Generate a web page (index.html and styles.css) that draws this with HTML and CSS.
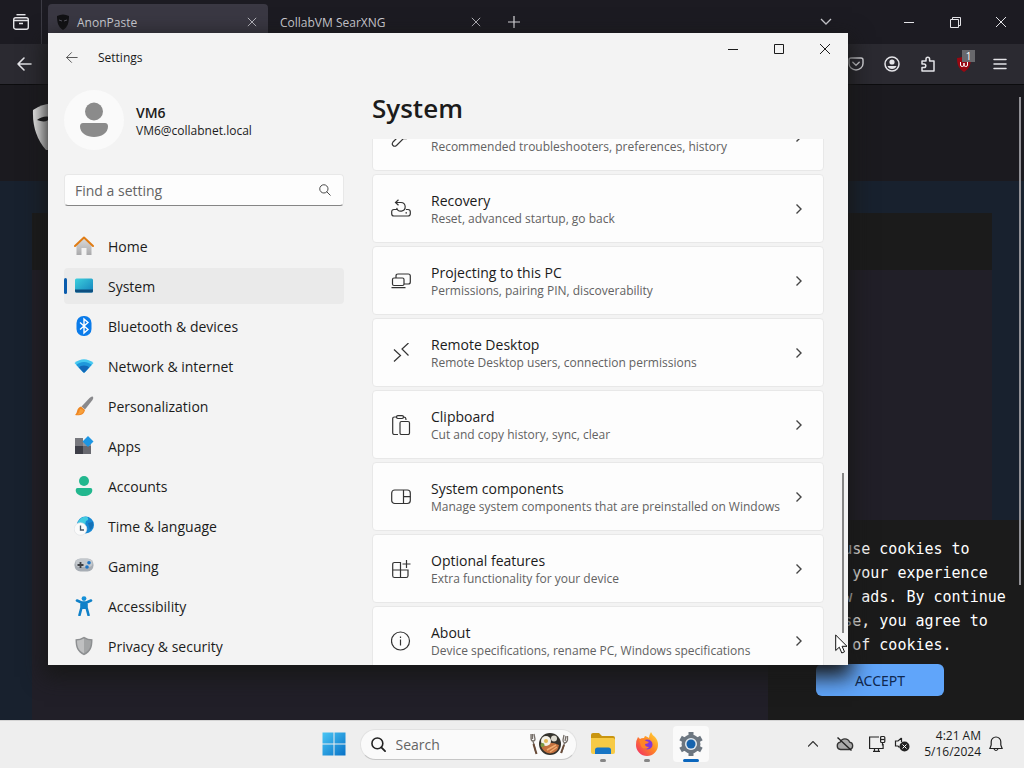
FILE: index.html
```html
<!DOCTYPE html>
<html lang="en">
<head>
  <meta charset="UTF-8" />
  <meta name="viewport" content="width=device-width, initial-scale=1.0"/>
  <title>Settings</title>
  <link rel="stylesheet" href="styles.css">
</head>
<body>
  <!-- Shared icons -->
  <svg class="sprite" aria-hidden="true">
    <symbol id="chevron" viewBox="0 0 16 16"><path d="M5.500 3.500L10 8l-4.500 4.500" fill="none" stroke="#444" stroke-width="1.4"/></symbol>
    <symbol id="close" viewBox="0 0 12 12"><path d="M1 1l10 10M11 1L1 11" fill="none" stroke="currentColor"/></symbol>
    <symbol id="back" viewBox="0 0 16 16"><path d="M15 8H2M8 2L2 8l6 6" fill="none" stroke="currentColor" stroke-width="1.200" stroke-linecap="round" stroke-linejoin="round"/></symbol>
    <symbol id="glass" viewBox="0 0 16 16"><circle cx="6.500" cy="6.500" r="5.500" fill="none" stroke="currentColor" stroke-width="1.300"/><path d="M10.500 10.500L15 15" stroke="currentColor" stroke-width="1.300" stroke-linecap="round"/></symbol>
  </svg>

  <div class="desktop">
    <div class="browser">
      <div class="tab-bar">
        <button class="view-btn" aria-label="Firefox View">
          <svg width="18" height="18" viewBox="0 0 18 18" fill="none" stroke="#e4e4e8" stroke-width="1.4"><path d="M4.500 1.700h9"/><rect x="1.700" y="4.700" width="14.600" height="11.500" rx="2"/><path d="M2 7.500h14M7 10.500h4"/></svg>
        </button>
        <div class="tab active">
          <svg width="14" height="16" viewBox="0 0 14 16"><path d="M1 2q6-3 12 0c0 6-1 11-6 14C2 13 1 8 1 2z" fill="#111114"/><path d="M3 6l3 1M11 6L8 7" stroke="#55545e"/></svg>
          <span>AnonPaste</span>
          <button aria-label="Close tab"><svg width="10" height="10"><use href="#close"/></svg></button>
        </div>
        <div class="tab">
          <span>CollabVM SearXNG</span>
          <button aria-label="Close tab"><svg width="10" height="10"><use href="#close"/></svg></button>
        </div>
        <button class="new-tab" aria-label="New tab">
          <svg width="12" height="12" viewBox="0 0 12 12"><path d="M6 0v12M0 6h12" stroke="#dcdce0" stroke-width="1.2"/></svg>
        </button>
        <button class="all-tabs" aria-label="List all tabs">
          <svg width="12" height="8" viewBox="0 0 12 8"><path d="M1 1l5 5 5-5" fill="none" stroke="#cfcfd4" stroke-width="1.3"/></svg>
        </button>
        <div class="window-controls">
          <button aria-label="Minimize"><svg width="10" height="10"><path d="M0 5.500h10" stroke="currentColor"/></svg></button>
          <button aria-label="Restore"><svg width="11" height="11" fill="none" stroke="currentColor"><path d="M.5 2.500h8v8h-8zM2.500 2.500v-2h8v8h-2"/></svg></button>
          <button aria-label="Close"><svg width="12" height="12"><use href="#close"/></svg></button>
        </div>
      </div>

      <div class="toolbar">
        <button class="go-back" aria-label="Back"><svg width="16" height="16" viewBox="0 0 16 16"><path d="M15 8H2M8 2L2 8l6 6" fill="none" stroke="currentColor" stroke-width="1.600" stroke-linecap="round" stroke-linejoin="round"/></svg></button>
        <button aria-label="Save to Pocket"><svg width="16" height="16" viewBox="0 0 16 16" fill="none" stroke="currentColor" stroke-width="1.4"><path d="M3 2h10a2 2 0 0 1 2 2v3.500a7 6.500 0 0 1-14 0V4a2 2 0 0 1 2-2z"/><path d="M4.800 6.300L8 9.300l3.200-3" stroke-linecap="round"/></svg></button>
        <button aria-label="Account"><svg width="16" height="16" viewBox="0 0 16 16"><circle cx="8" cy="8" r="7" fill="none" stroke="currentColor" stroke-width="1.500"/><circle cx="8" cy="6" r="2.600" fill="currentColor"/><path d="M3.500 10h9c-1 4-8 4-9 0z" fill="currentColor"/></svg></button>
        <button aria-label="Extensions"><svg width="16" height="16" viewBox="0 0 16 16" fill="none" stroke="currentColor" stroke-width="1.500" stroke-linejoin="round"><path d="M2 5h4V3a1.800 1.800 0 0 1 3.600 0v2H14v10H2v-3.500h2a1.800 1.800 0 0 0 0-3.600H2z"/></svg></button>
        <button class="ublock" aria-label="uBlock Origin">
          <svg width="16" height="16" viewBox="0 0 16 16"><path d="M8 0q3 2 7 2c0 7-2 11-7 14C3 13 1 9 1 2q4 0 7-2z" fill="#980812"/><path d="M4.500 6v3q0 1.500 1.700 1.500T8 9V7v2q0 1.500 1.800 1.500T11.500 9V6" fill="none" stroke="#fff"/></svg>
          <span class="count">1</span>
        </button>
        <button aria-label="Menu"><svg width="14" height="12" viewBox="0 0 14 12"><path d="M1 1.500h12M1 6h12M1 10.500h12" stroke="currentColor" stroke-width="1.500" stroke-linecap="round"/></svg></button>
      </div>

      <div class="page">
        <div class="page-header">
          <svg width="40" height="48" viewBox="0 0 40 48"><path d="M1 8Q20-5 39 8c0 20-4 34-19 40h-6Q0 32 1 8z" fill="#f4f4f4"/><path d="M5 18q6-5 14-3-4 7-14 3zM24 17q7-5 12 0-6 6-12 0z" fill="#18181b"/></svg>
        </div>
        <div class="paste">
          <div class="paste-head"></div>
          <div class="paste-body"></div>
        </div>
        <div class="cookies">
          <p>We may use cookies to improve your experience and show ads. By continue to browse, you agree to the use of cookies.</p>
          <button>ACCEPT</button>
        </div>
        <div class="page-scroll"></div>
      </div>

      <div class="settings">
        <div class="titlebar">
          <button class="settings-back" aria-label="Back"><svg width="13" height="13"><use href="#back"/></svg></button>
          <span>Settings</span>
          <div class="window-controls">
            <button aria-label="Minimize"><svg width="10" height="10"><path d="M0 5.500h10" stroke="currentColor"/></svg></button>
            <button aria-label="Maximize"><svg width="10" height="10"><path d="M.5.500h9v9h-9z" fill="none" stroke="currentColor"/></svg></button>
            <button aria-label="Close"><svg width="12" height="12"><use href="#close"/></svg></button>
          </div>
        </div>

        <div class="settings-body">
          <div class="sidebar">
            <div class="profile">
              <div class="avatar"><svg width="30" height="36" viewBox="0 0 30 36" fill="#8b8b8b"><circle cx="15" cy="9.500" r="9"/><path d="M4 21h22q3 0 3 3.500C29 31 22 35 15 35S1 31 1 24.500Q1 21 4 21z"/></svg></div>
              <div>
                <div class="name">VM6</div>
                <div class="email">VM6@collabnet.local</div>
              </div>
            </div>

            <div class="find">
              <input type="text" placeholder="Find a setting" aria-label="Find a setting">
              <svg width="12" height="12"><use href="#glass"/></svg>
            </div>

            <nav>
              <a href="#">
                <svg width="20" height="20" viewBox="0 0 20 20"><defs><linearGradient id="wall" x2="0" y2="1"><stop stop-color="#dcdcdc"/><stop offset="1" stop-color="#a9a9ab"/></linearGradient></defs><path d="M2.500 9L10 2l7.500 7v10h-5v-7h-5v7h-5z" fill="url(#wall)"/><path d="M1 10l9-8.500L19 10" fill="none" stroke="#e07c14" stroke-width="2" stroke-linecap="round" stroke-linejoin="round"/></svg>
                Home
              </a>
              <a href="#" class="selected">
                <svg width="20" height="20" viewBox="0 0 20 20"><defs><linearGradient id="scr" x2="1" y2="1"><stop stop-color="#3dd0dd"/><stop offset="1" stop-color="#1482bd"/></linearGradient></defs><rect x="1" y="2.500" width="18" height="14" rx="1.500" fill="url(#scr)"/><path d="M1 13.500h18v1.500q0 1.500-1.500 1.500h-15Q1 16.500 1 15z" fill="#0d4f80"/></svg>
                System
              </a>
              <a href="#">
                <svg width="20" height="20" viewBox="0 0 20 20"><rect x="2.500" y="0" width="15" height="20" rx="7" fill="#0a7bea"/><path d="M6 6.500l8 7-4 3.500V3l4 3.500-8 7" fill="none" stroke="#fff" stroke-width="1.400"/></svg>
                Bluetooth &amp; devices
              </a>
              <a href="#">
                <svg width="20" height="20" viewBox="0 0 20 20"><defs><clipPath id="fan"><path d="M.5 7Q10-.5 19.500 7L11 16q-1 1-2 0z"/></clipPath></defs><g clip-path="url(#fan)"><rect width="20" height="20" fill="#45c8f0"/><circle cx="10" cy="18" r="12" fill="#1f98db"/><circle cx="10" cy="18" r="8.500" fill="#1268b8"/></g></svg>
                Network &amp; internet
              </a>
              <a href="#">
                <svg width="20" height="20" viewBox="0 0 20 20"><path d="M18.500.5q1.500 1 0 3.500L11 13.500 7.500 10.500 15.500 2q2-2 3-1.500z" fill="#89898c"/><path d="M7 10.500l4 3.500c-1 5-6 6-10 5 3-2 1-7 6-8.500z" fill="#ee8622"/><path d="M6 13q3 0 4 2-3 4-7 3.500 2-1 3-5.500z" fill="#f8a03b"/></svg>
                Personalization
              </a>
              <a href="#">
                <svg width="20" height="20" viewBox="0 0 20 20"><path d="M1 2h8v8H1z" fill="#77787e"/><path d="M1 10h8v8H1z" fill="#3d3e47"/><path d="M9 10h8v8H9z" fill="#686970"/><path d="M9 5h8v5H9z" fill="#929399"/><path d="M14 0l5.500 5.500L14 11 8.500 5.500z" fill="#1c96e4"/></svg>
                Apps
              </a>
              <a href="#">
                <svg width="20" height="20" viewBox="0 0 20 20" fill="#22b78e"><circle cx="10" cy="5" r="5"/><path d="M3.500 12h13q1.800 0 1.800 2c0 4-4 6-8.300 6s-8.300-2-8.300-6q0-2 1.800-2z"/></svg>
                Accounts
              </a>
              <a href="#">
                <svg width="20" height="20" viewBox="0 0 20 20"><circle cx="11.500" cy="9" r="8.500" fill="#1688d4"/><path d="M4 6Q7 0 13 .7q3 3-1 4.300l-1 4-7-1z" fill="#42cbe0"/><path d="M14 7l5-1q1 5-3 8z" fill="#1671b5"/><circle cx="6.500" cy="13" r="6.300" fill="#fafafa" stroke="#dcdfe2" stroke-width=".6"/><path d="M6.500 9.500V14H10" fill="none" stroke="#455565" stroke-width="1.300"/></svg>
                Time &amp; language
              </a>
              <a href="#">
                <svg width="20" height="20" viewBox="0 0 20 20"><rect x=".5" y="2.500" width="19" height="13" rx="6" fill="#a7adb4"/><rect x="1.500" y="3" width="17" height="8" rx="4" fill="#c3c8cd"/><path d="M6.500 6v6M3.500 9h6" stroke="#3e4044" stroke-width="1.800"/><circle cx="15" cy="6.800" r="1.800" fill="#1d74c4"/><circle cx="13" cy="11" r="1.800" fill="#1d74c4"/></svg>
                Gaming
              </a>
              <a href="#">
                <svg width="20" height="20" viewBox="0 0 20 20"><circle cx="10" cy="2.600" r="2.400" fill="#1590d8"/><path d="M3 4.500l4.500 2h5l4.500-2M7.500 6.500v5L5.500 19M12.500 6.500v5l2 7.500" fill="none" stroke="#0f80c8" stroke-width="2.600" stroke-linecap="round" stroke-linejoin="round"/><path d="M7 6h6v7H7z" fill="#0f80c8"/></svg>
                Accessibility
              </a>
              <a href="#">
                <svg width="20" height="20" viewBox="0 0 20 20"><path d="M10 .7q4 2.500 8.500 2.500c0 8-1.500 12.500-8.500 16.100C3 15.700 1.500 11.200 1.500 3.200Q6 3.200 10 .7z" fill="#8d8f91"/><path d="M10 2.500q3.500 2 7 2.100C17 11 15.500 14.500 10 17.500z" fill="#a3a5a6"/><path d="M10 2.500q-3.500 2-7 2.100C3 11 4.500 14.500 10 17.500z" fill="#bfc0c1"/></svg>
                Privacy &amp; security
              </a>
            </nav>
          </div>

          <div class="content">
            <h1>System</h1>
            <div class="viewport">
              <div class="cards">
                <button class="card">
                  <svg width="20" height="20" viewBox="0 0 20 20"><path d="M18 4.500l-3 3-2.500-2.500 3-3Q11-.5 9 4q-.5 2 0 4l-7 7q-1.500 2 0 3.500t3.500 0l7-7Q18 12.500 18.500 8q.3-2-.5-3.500z"/></svg>
                  <span class="card-text"><b>Troubleshoot</b><small>Recommended troubleshooters, preferences, history</small></span>
                  <svg width="16" height="16"><use href="#chevron"/></svg>
                </button>
                <button class="card">
                  <svg width="20" height="20" viewBox="0 0 20 20"><path d="M6 10.500H3q-2.300 0-2.300 2.300v2Q.7 17 3 17h14q2.300 0 2.300-2.200v-2q0-2.300-2.300-2.300h-2M4.500 3.500H10a4.300 4.300 0 1 1-4.300 5.300M7.500.8L4.500 3.500l3 2.700M14.500 13.800h1.500"/></svg>
                  <span class="card-text"><b>Recovery</b><small>Reset, advanced startup, go back</small></span>
                  <svg width="16" height="16"><use href="#chevron"/></svg>
                </button>
                <button class="card">
                  <svg width="20" height="20" viewBox="0 0 20 20"><rect x="1.500" y="7" width="11.500" height="7.500" rx="1.500"/><path d="M5 7V5Q5 3 7 3h10.300q2 0 2 2v6q0 2-2 2H13M.5 16.700h14"/></svg>
                  <span class="card-text"><b>Projecting to this PC</b><small>Permissions, pairing PIN, discoverability</small></span>
                  <svg width="16" height="16"><use href="#chevron"/></svg>
                </button>
                <button class="card">
                  <svg width="20" height="20" viewBox="0 0 20 20"><path d="M3 6.500l6.500 6L3 18.500M17.500 0L11 6l6.500 6.500"/></svg>
                  <span class="card-text"><b>Remote Desktop</b><small>Remote Desktop users, connection permissions</small></span>
                  <svg width="16" height="16"><use href="#chevron"/></svg>
                </button>
                <button class="card">
                  <svg width="20" height="20" viewBox="0 0 20 20"><path d="M6 2H3.500Q1.700 2 1.700 3.500v14.500Q1.700 19.500 3.500 19.500H7M12.500 2q2.500-.2 2.500 3"/><rect x="5.500" y=".7" width="7" height="2.800" rx="1.400"/><rect x="9" y="6.500" width="9.500" height="13" rx="1.500"/></svg>
                  <span class="card-text"><b>Clipboard</b><small>Cut and copy history, sync, clear</small></span>
                  <svg width="16" height="16"><use href="#chevron"/></svg>
                </button>
                <button class="card">
                  <svg width="20" height="20" viewBox="0 0 20 20"><rect x=".7" y="3" width="18.600" height="13.500" rx="3"/><path d="M12.500 3v13.500M12.500 9.700h6.800"/></svg>
                  <span class="card-text"><b>System components</b><small>Manage system components that are preinstalled on Windows</small></span>
                  <svg width="16" height="16"><use href="#chevron"/></svg>
                </button>
                <button class="card">
                  <svg width="20" height="20" viewBox="0 0 20 20"><path d="M9.500 18.500v-15H3.500q-1.800 0-1.800 1.800v11.400q0 1.800 1.800 1.800h11.700q1.800 0 1.800-1.800V11H1.700M15.500 1v8M11.500 5h8"/></svg>
                  <span class="card-text"><b>Optional features</b><small>Extra functionality for your device</small></span>
                  <svg width="16" height="16"><use href="#chevron"/></svg>
                </button>
                <button class="card">
                  <svg width="20" height="20" viewBox="0 0 20 20"><circle cx="9.500" cy="10" r="9"/><path d="M9.500 8.500v6M9.500 5.500v1.500"/></svg>
                  <span class="card-text"><b>About</b><small>Device specifications, rename PC, Windows specifications</small></span>
                  <svg width="16" height="16"><use href="#chevron"/></svg>
                </button>
              </div>
            </div>
          </div>
        </div>
        <div class="settings-scroll"></div>
        <svg class="pointer" width="13" height="20" viewBox="0 0 13 20"><path d="M.7 1v15.500l3.600-3.300L6.800 19l2.700-1.200-2.400-5.500H12z" fill="#fff" stroke="#111"/></svg>
      </div>
    </div>

    <div class="taskbar">
      <div class="pinned">
        <button class="task" aria-label="Start">
          <svg width="24" height="24" viewBox="0 0 24 24"><defs><linearGradient id="win" gradientUnits="userSpaceOnUse" x1="0" y1="0" x2="24" y2="24"><stop stop-color="#4cc8f6"/><stop offset="1" stop-color="#0670c6"/></linearGradient></defs><path d="M.5.500h11v11H.5zM12.500.500h11v11h-11zM.5 12.500h11v11H.5zM12.500 12.500h11v11h-11z" fill="url(#win)"/></svg>
        </button>
        <div class="search">
          <svg width="15" height="15" viewBox="0 0 16 16"><circle cx="6.800" cy="6.800" r="5.800" fill="none" stroke="#222" stroke-width="1.700"/><path d="M11 11l4 4" stroke="#222" stroke-width="1.900" stroke-linecap="round"/></svg>
          <input type="text" placeholder="Search" aria-label="Search">
          <svg width="40" height="24" viewBox="0 0 40 24"><path d="M2 2v4q0 3 2 3l3 12M5 2l1 5q0 2-2 2M3.500 2v5" fill="none" stroke="#77706a" stroke-width="1.300"/><path d="M4.500 12l3 10" stroke="#694b38" stroke-width="2"/><path d="M38.500 4v4q-1 3-3 3l-3 10M35 3l-1 5q0 2 1.500 3M37 4l-1 5" fill="none" stroke="#77706a" stroke-width="1.300"/><path d="M35 13l-3 8" stroke="#694b38" stroke-width="2"/><circle cx="21" cy="12" r="11" fill="#34322c"/><path d="M12 14q8-6 18-1-1 8-9 8.500-7-1-9-7.500z" fill="#c4713e"/><path d="M18 18l9-5M21 20l7-5" stroke="#f0ad70" stroke-width="1.500"/><circle cx="17" cy="9" r="5" fill="#f4f1e8"/><circle cx="17" cy="9" r="2" fill="#e3b958"/><circle cx="25" cy="6.500" r="3" fill="#dedbd0"/><circle cx="13.500" cy="13" r="2" fill="#7a9b45"/></svg>
        </div>
        <button class="task open" aria-label="File Explorer">
          <svg width="26" height="24" viewBox="0 0 26 24"><path d="M1 3q0-2 2-2h6l3 3h11q2 0 2 2v4H1z" fill="#c99510"/><path d="M1 6h22q2 0 2 2v12q0 2-2 2H3q-2 0-2-2z" fill="#f7ca45"/><path d="M5 22v-4q0-2.500 2.500-2.500h11q2.500 0 2.500 2.500v4z" fill="#1775c4"/></svg>
        </button>
        <button class="task open" aria-label="Firefox">
          <svg width="24" height="24" viewBox="0 0 24 24"><defs><linearGradient id="fox" x1="1" y1="0" x2="0" y2="1"><stop stop-color="#ffe03d"/><stop offset=".45" stop-color="#ff8a22"/><stop offset="1" stop-color="#f0246c"/></linearGradient></defs><path d="M3 5l2 2q1-1 4-1l1-2c2 1 3 1 4 2Q14 3 16 0q1 3 4 5 3 3 3 8a11 11 0 0 1-22 0q0-5 2-8z" fill="url(#fox)"/><circle cx="12.500" cy="12.500" r="5" fill="#8537d6"/><path d="M4 8q5-2 7 1l3 1q-1 2-4 2 0 3 4 3c-2 3-7 2-8-1z" fill="#ff8427"/></svg>
        </button>
        <button class="task open current" aria-label="Settings">
          <svg width="26" height="26" viewBox="0 0 26 26"><circle cx="13" cy="13" r="7.500" fill="none" stroke="#6c7680" stroke-width="4"/><path d="M10.500 1h5v5h-5zM10.500 20h5v5h-5z" fill="#6c7680"/><path d="M10.500 1h5v5h-5zM10.500 20h5v5h-5z" fill="#6c7680" transform="rotate(60 13 13)"/><path d="M10.500 1h5v5h-5zM10.500 20h5v5h-5z" fill="#6c7680" transform="rotate(120 13 13)"/><circle cx="13" cy="13" r="6" fill="#dfe6ec"/><circle cx="13" cy="13" r="4.500" fill="#1663ad"/></svg>
        </button>
      </div>
      <div class="tray">
        <svg width="10" height="6" viewBox="0 0 10 6"><path d="M0 5.500l5-5 5 5" fill="none" stroke="#333" stroke-width="1.200"/></svg>
        <svg width="18" height="16" viewBox="0 0 18 16"><path d="M4.500 13.500a3.700 3.700 0 0 1-.3-7.300 5 5 0 0 1 9.400 0 3.700 3.700 0 0 1 0 7.300z" fill="#a9a9a9" stroke="#333" stroke-width="1.300"/><path d="M1.500 1.500l14 13" stroke="#222" stroke-width="1.400"/></svg>
        <svg width="18" height="18" viewBox="0 0 18 18" fill="none" stroke="#222" stroke-width="1.200"><path d="M11 2H1.600v11.500h13.500V9M5 16.400h7M6.500 13.500v3M10.500 13.500v3M14.500 7.500v3"/><rect x="12.600" y="1.500" width="4.200" height="6" rx="1"/><path d="M13 4.500h3.500"/></svg>
        <svg width="16" height="16" viewBox="0 0 16 16"><path d="M7.500 2L4 5H1.500v5H4l1.500 1.500M7.500 2v4" fill="none" stroke="#222" stroke-width="1.200"/><circle cx="10.500" cy="10.500" r="5" fill="#222"/><path d="M8.500 8.500l4 4M12.500 8.500l-4 4" stroke="#fff"/></svg>
        <div class="clock">4:21 AM<br>5/16/2024</div>
        <svg width="14" height="16" viewBox="0 0 14 16" fill="none" stroke="#222" stroke-width="1.200"><path d="M7 1a4.800 4.800 0 0 0-4.800 4.800V9L.9 12.500h12.200L11.800 9V5.800A4.800 4.800 0 0 0 7 1zM5 13q2 3 4 0"/></svg>
      </div>
    </div>
  </div>
</body>
</html>
```

FILE: styles.css
```css
* {
  box-sizing: border-box;
}

body {
  margin: 0;
  font-family: 'Open Sans', 'Noto Sans', sans-serif;
  font-size: 14px;
  color: #1b1b1b;
}

button, input {
  font-family: inherit;
  color: inherit;
  border: none;
  background: none;
  padding: 0;
}

svg {
  display: block;
  flex: none;
}

.sprite {
  position: absolute;
  width: 0;
  height: 0;
}

.desktop {
  display: flex;
  flex-direction: column;
  height: 100vh;
  overflow: hidden;
}

/* Browser */
.browser {
  position: relative;
  flex: 1;
  display: flex;
  flex-direction: column;
  min-height: 0;
  background-color: #1c1b20;
  color: #e4e4e8;
}

.tab-bar {
  display: flex;
  height: 44px;
  background-color: #1c1b22;
}

.tab-bar button {
  display: grid;
  place-items: center;
}

.view-btn {
  width: 42px;
  margin-right: 6px;
  border-right: 1px solid #3c3b44;
}

.tab {
  display: flex;
  align-items: center;
  gap: 7px;
  width: 220px;
  margin: 4px 4px 4px 0;
  padding: 0 8px;
  border-radius: 4px;
  font-size: 12px;
  color: #d2d2d8;
}

.tab.active {
  background-color: #3a3843;
}

.tab span {
  flex: 1;
}

.tab button {
  width: 16px;
  height: 16px;
}

.new-tab {
  width: 36px;
}

.all-tabs {
  width: 40px;
  margin: 0 40px 0 auto;
}

.window-controls {
  display: flex;
}

.window-controls button {
  display: grid;
  place-items: center;
  width: 46px;
}

.toolbar {
  display: flex;
  align-items: center;
  gap: 20px;
  height: 41px;
  padding: 0 16px;
  background-color: #2b2a31;
  border-bottom: 1px solid #0c0c0e;
}

.toolbar button {
  position: relative;
  display: grid;
  place-items: center;
  width: 16px;
  height: 16px;
}

.toolbar .go-back {
  margin-right: auto;
}

.count {
  position: absolute;
  top: -6px;
  left: 6px;
  width: 13px;
  background-color: #68686c;
  color: #fff;
  font-size: 10px;
  line-height: 12px;
  text-align: center;
}

.page {
  position: relative;
  flex: 1;
  display: flex;
  flex-direction: column;
  background-color: #18212e;
}

.page-header {
  height: 96px;
  padding: 17px 32px;
  background-color: #1b1a1f;
}

.paste {
  flex: 1;
  display: flex;
  flex-direction: column;
  margin: 32px 32px 0;
}

.paste-head {
  height: 57px;
  background-color: #1b1b1b;
}

.paste-body {
  flex: 1;
  background-color: #211f28;
}

.cookies {
  position: absolute;
  right: 0;
  bottom: 0;
  width: 256px;
  height: 200px;
  padding: 17px 12px 0;
  background-color: #1b1b1b;
  color: #fff;
  font-family: 'DejaVu Sans Mono', monospace;
  font-size: 15px;
  line-height: 24px;
}

.cookies p {
  margin: 0 0 7px;
}

.cookies button {
  width: 128px;
  height: 32px;
  margin-left: 36px;
  border-radius: 6px;
  background-color: #60a5fa;
  color: #10284f;
  font-family: 'Noto Sans', sans-serif;
  font-size: 14px;
}

.page-scroll {
  position: absolute;
  top: 12px;
  right: 3px;
  bottom: 135px;
  width: 2px;
  background-color: #929196;
}

/* Settings window */
.settings {
  position: absolute;
  inset: 33px 176px 55px 48px;
  display: flex;
  flex-direction: column;
  background-color: #f3f3f3;
  color: #1b1b1b;
  box-shadow: 0 8px 20px 4px #181818;
}

.titlebar {
  display: flex;
  align-items: center;
  height: 48px;
  padding-left: 17px;
  font-size: 12px;
}

.settings-back {
  margin-right: 20px;
  color: #555;
}

.titlebar .window-controls {
  align-self: flex-start;
  height: 32px;
  margin-left: auto;
}

.settings-body {
  flex: 1;
  display: flex;
  gap: 28px;
  min-height: 0;
  padding: 0 24px 0 16px;
}

.sidebar {
  width: 280px;
  overflow: hidden;
}

.profile {
  display: flex;
  align-items: center;
  gap: 12px;
  margin: 9px 0 24px;
}

.avatar {
  display: grid;
  place-items: center;
  width: 60px;
  height: 60px;
  border-radius: 50%;
  background-color: #fafafa;
}

.name {
  padding-top: 2px;
  font-weight: 600;
  line-height: 20px;
}

.email {
  font-size: 12px;
  line-height: 16px;
}

.find {
  display: flex;
  align-items: center;
  height: 32px;
  padding: 0 12px 0 10px;
  border: 1px solid #e8e8e8;
  border-bottom-color: #858585;
  border-radius: 4px;
  background-color: #fdfdfd;
  color: #444;
}

.find input {
  flex: 1;
  min-width: 0;
  font-size: 14px;
}

input::placeholder {
  color: #646464;
}

nav {
  display: flex;
  flex-direction: column;
  gap: 4px;
  margin-top: 22px;
}

nav a {
  display: flex;
  flex: none;
  align-items: center;
  gap: 14px;
  height: 36px;
  padding-left: 10px;
  border-radius: 4px;
  color: #1b1b1b;
  text-decoration: none;
}

nav .selected {
  position: relative;
  background-color: #eaeaea;
}

nav .selected::before {
  content: '';
  position: absolute;
  left: 0;
  width: 3px;
  height: 16px;
  border-radius: 2px;
  background-color: #0a5cad;
}

.content {
  flex: 1;
  display: flex;
  flex-direction: column;
  min-width: 0;
}

h1 {
  margin: 7px 0 11px;
  font-size: 26px;
  font-weight: 600;
  line-height: 40px;
}

.viewport {
  flex: 1;
  min-height: 0;
  overflow: hidden;
}

/* list is scrolled part of the way down */
.cards {
  display: flex;
  flex-direction: column;
  gap: 3px;
  margin-top: -37px;
}

.card {
  display: flex;
  align-items: center;
  gap: 20px;
  height: 69px;
  padding: 0 16px 0 18px;
  border: 1px solid #e8e8e8;
  border-radius: 4px;
  background-color: #fdfdfd;
  text-align: left;
  fill: none;
  stroke: #333;
  stroke-width: 1.2;
}

.card-text {
  flex: 1;
  min-width: 0;
  white-space: nowrap;
}

.card b, .card small {
  display: block;
}

.card b {
  font-size: 14px;
  font-weight: 400;
  line-height: 20px;
}

.card small {
  font-size: 12px;
  line-height: 16px;
  color: #626262;
}

.settings-scroll {
  position: absolute;
  right: 4px;
  bottom: 32px;
  width: 2px;
  height: 160px;
  background-color: #858585;
}

.pointer {
  position: absolute;
  right: 0;
  bottom: 11px;
}

/* Taskbar */
.taskbar {
  position: relative;
  display: grid;
  grid-template-columns: 1fr auto 1fr;
  align-items: center;
  height: 48px;
  background-color: #eeeeee;
  box-shadow: inset 0 1px #d4d4d4;
}

.pinned {
  grid-column: 2;
  display: flex;
  align-items: center;
}

.task {
  position: relative;
  display: grid;
  place-items: center;
  width: 36px;
  height: 36px;
  margin: 0 4px;
  border-radius: 4px;
}

.task.open::after {
  content: '';
  position: absolute;
  bottom: 0;
  left: 15px;
  width: 6px;
  height: 3px;
  border-radius: 2px;
  background-color: #868686;
}

.task.current {
  background-color: #fafafa;
}

.task.current::after {
  left: 10px;
  width: 16px;
  background-color: #0a66bd;
}

.search {
  display: flex;
  align-items: center;
  gap: 10px;
  width: 217px;
  height: 31px;
  margin: 0 4px;
  padding: 0 7px 0 10px;
  border: 1px solid #e2e2e2;
  border-bottom-color: #c6c6c6;
  border-radius: 16px;
  background-color: #fafafa;
}

.search input {
  flex: 1;
  min-width: 0;
  font-size: 14px;
}

.tray {
  display: flex;
  align-items: center;
  justify-content: flex-end;
  gap: 8px;
  padding-right: 21px;
}

.tray svg:first-child {
  margin-right: 10px;
}

.tray svg:nth-child(2) {
  margin-right: 6px;
}

.clock {
  margin-left: 6px;
  font-size: 12px;
  line-height: 16px;
  text-align: right;
}
```
